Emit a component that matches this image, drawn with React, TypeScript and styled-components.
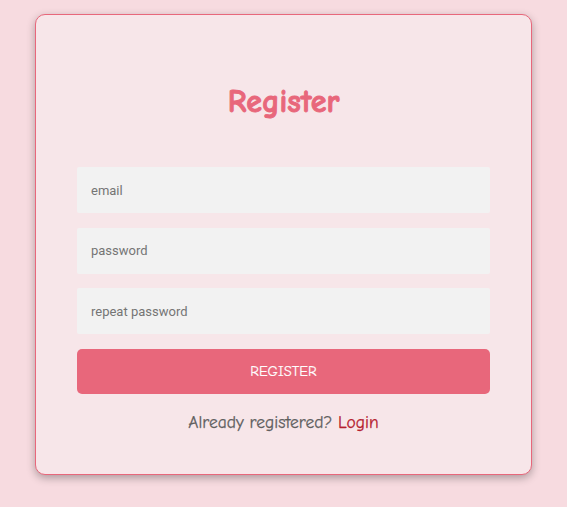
import React from "react";
import styled, { createGlobalStyle } from "styled-components";

const Global = createGlobalStyle`
  html, body { margin: 0; padding: 0; }
  body {
    background: #f7dbe0;
    font-family: "Comic Sans MS", "Comic Neue", "Liberation Sans", sans-serif;
  }
`;

const Page = styled.div`
  display: flex;
  justify-content: center;
  align-items: flex-start;
  padding-top: 14px;
  min-height: 507px;
  box-sizing: border-box;
`;

const Card = styled.form`
  width: 497px;
  box-sizing: border-box;
  background: #f7e6e9;
  border: 1px solid #e8677b;
  border-radius: 10px;
  box-shadow: 0 3px 9px rgba(0, 0, 0, 0.3);
  padding: 69px 41px 40px;
  display: flex;
  flex-direction: column;
`;

const Title = styled.h1`
  margin: 0 0 47px;
  font-size: 32px;
  line-height: 36px;
  font-weight: bold;
  color: #e8677b;
  -webkit-text-stroke: 0.9px #e8677b;
  text-align: center;
`;

const Fields = styled.div`
  display: flex;
  flex-direction: column;
  gap: 14.5px;
`;

const Input = styled.input`
  height: 46px;
  box-sizing: border-box;
  border: none;
  border-radius: 2px;
  background: #f2f2f2;
  padding: 0 14px;
  font-family: Roboto, "Liberation Sans", sans-serif;
  font-size: 13px;
  color: #333;
  outline: none;
  &::placeholder { color: #757575; }
`;

const Button = styled.button`
  height: 45px;
  border: none;
  border-radius: 5px;
  background: #e8677b;
  color: #ffffff;
  font-family: "Comic Sans MS", "Comic Neue", "Liberation Sans", sans-serif;
  font-size: 14.5px;
  -webkit-text-stroke: 0.2px #ffffff;
  cursor: pointer;
`;

const Footer = styled.p`
  margin: 16px 0 0;
  font-size: 17.5px;
  line-height: 24px;
  color: #5f5f5f;
  -webkit-text-stroke: 0.25px currentColor;
  text-align: center;
`;

const Link = styled.a`
  color: #b5202e;
  text-decoration: none;
`;

export default function App() {
  return (
    <>
      <Global />
      <Page>
        <Card onSubmit={(e) => e.preventDefault()}>
          <Title>Register</Title>
          <Fields>
            <Input type="email" placeholder="email" />
            <Input type="password" placeholder="password" />
            <Input type="password" placeholder="repeat password" />
            <Button type="submit">REGISTER</Button>
          </Fields>
          <Footer>
            Already registered? <Link href="#">Login</Link>
          </Footer>
        </Card>
      </Page>
    </>
  );
}
